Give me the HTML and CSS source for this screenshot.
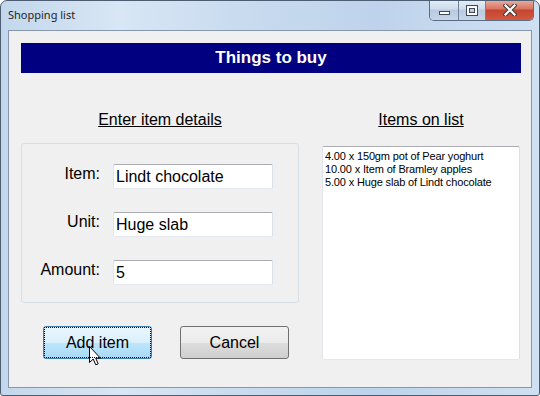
FILE: index.html
```html
<!DOCTYPE html>
<html>
  <head>
    <title>Shopping list</title>
    <link rel="stylesheet" href="styles.css">
  </head>
  <body>
    <div class="window">
      <div class="titlebar">
        <span class="title">Shopping list</span>
        <div class="controls">
          <div class="ctl ctl-min"><span class="min-bar"></span></div>
          <div class="ctl ctl-max"><span class="max-box"></span></div>
          <div class="ctl ctl-close">
            <svg width="14" height="12" viewBox="0 0 14 12">
              <path d="M2.5 1.5 L11.5 10.5 M11.5 1.5 L2.5 10.5" stroke="#3b3b3b" stroke-width="4.2" stroke-linecap="square"/>
              <path d="M2.5 1.5 L11.5 10.5 M11.5 1.5 L2.5 10.5" stroke="#ffffff" stroke-width="2.2" stroke-linecap="square"/>
            </svg>
          </div>
        </div>
      </div>
      <div class="client">
        <div class="banner">Things to buy</div>
        <div class="content">
          <div class="col-left">
            <h2 class="caption">Enter item details</h2>
            <div class="groupbox">
              <label class="field-label" for="item">Item:</label>
              <input class="textbox" id="item" type="text" value="Lindt chocolate">
              <label class="field-label" for="unit">Unit:</label>
              <input class="textbox" id="unit" type="text" value="Huge slab">
              <label class="field-label" for="amount">Amount:</label>
              <input class="textbox" id="amount" type="text" value="5">
            </div>
            <div class="buttons">
              <button class="btn btn-add">
                Add item
                <svg class="pointer" width="13" height="20" viewBox="0 0 13 20">
                  <path d="M0.5 0.5 L0.5 16.5 L4.2 13 L6.8 18.8 L9.2 17.8 L6.7 12.2 L11.5 12.2 Z" fill="#ffffff" stroke="#000000" stroke-width="1" stroke-linejoin="miter"/>
                </svg>
              </button>
              <button class="btn btn-cancel">Cancel</button>
            </div>
          </div>
          <div class="col-right">
            <h2 class="caption">Items on list</h2>
            <div class="listbox">
              <div class="list-row">4.00 x 150gm pot of Pear yoghurt</div>
              <div class="list-row">10.00 x Item of Bramley apples</div>
              <div class="list-row">5.00 x Huge slab of Lindt chocolate</div>
            </div>
          </div>
        </div>
      </div>
    </div>
  </body>
</html>
```

FILE: styles.css
```css
body {
  margin: 0;
  background-color: #ffffff;
  font-family: "Liberation Sans", Arial, sans-serif;
}

.window {
  display: flex;
  flex-direction: column;
  box-sizing: border-box;
  width: 540px;
  height: 396px;
  border: 1px solid #4d5e73;
  border-radius: 7px 7px 3px 3px;
  background: linear-gradient(to right, #c3d7ec 0%, #d8e6f5 22%, #c8dbef 45%, #bed3eb 70%, #cfe0f2 100%);
  overflow: hidden;
}

.titlebar {
  display: flex;
  justify-content: space-between;
  align-items: flex-start;
  height: 29px;
  flex-shrink: 0;
}
.title {
  padding: 5px 0 0 7px;
  font-family: "Noto Sans", "Open Sans", sans-serif;
  font-size: 11px;
  line-height: 18px;
  color: #1e1e1e;
}

.controls {
  display: flex;
  margin-top: -1px;
  margin-right: 5px;
  height: 20px;
  border: 1px solid #5b6c84;
  border-top: none;
  border-radius: 0 0 5px 5px;
  overflow: hidden;
}
.ctl {
  display: flex;
  justify-content: center;
  align-items: center;
  height: 20px;
  background: linear-gradient(to bottom, #e6eef8 0%, #cfdcec 45%, #b9cadf 50%, #c6d5e8 100%);
}
.ctl-min {
  width: 28px;
  border-right: 1px solid #6f819a;
}
.ctl-max {
  width: 26px;
  border-right: 1px solid #6f819a;
}
.ctl-close {
  width: 47px;
  background: linear-gradient(to bottom, #eab0a3 0%, #d9735f 45%, #c54530 50%, #d2583f 100%);
}
.min-bar {
  display: block;
  width: 9px;
  height: 2px;
  margin-top: 5px;
  background-color: #ffffff;
  border: 1px solid #3f4a58;
}
.max-box {
  display: block;
  width: 6px;
  height: 5px;
  border: 2px solid #ffffff;
  outline: 1px solid #3f4a58;
  box-shadow: inset 0 0 0 1px #3f4a58;
}

.client {
  flex: 1;
  margin: 0 7px 7px 7px;
  padding: 12px 0 0 12px;
  border: 1px solid #8696ab;
  background-color: #f0f0f0;
}

.banner {
  width: 500px;
  height: 30px;
  line-height: 30px;
  text-align: center;
  background-color: #000080;
  color: #ffffff;
  font-size: 17px;
  font-weight: bold;
}

.content {
  display: grid;
  grid-template-columns: 278px 198px;
  column-gap: 23px;
  margin-top: 38px;
}

.caption {
  margin: 0;
  font-size: 16px;
  font-weight: normal;
  line-height: 18px;
  text-align: center;
  text-decoration: underline;
  color: #000000;
}

.groupbox {
  display: grid;
  grid-template-columns: 78px 160px;
  grid-auto-rows: 25px;
  column-gap: 13px;
  row-gap: 23px;
  margin-top: 14px;
  padding: 20px 0 17px 0;
  border: 1px solid #d5dfe5;
  border-radius: 3px;
}
.field-label {
  align-self: start;
  padding-top: 1px;
  text-align: right;
  font-size: 16px;
  line-height: 18px;
  color: #000000;
}
.textbox {
  box-sizing: border-box;
  width: 160px;
  height: 25px;
  margin: 0;
  padding: 0 2px;
  border: 1px solid;
  border-color: #abadb3 #dbdfe6 #e3e9ef #e2e3ea;
  border-radius: 2px;
  background-color: #ffffff;
  font-family: "Liberation Sans", Arial, sans-serif;
  font-size: 16px;
  color: #000000;
}

.buttons {
  display: flex;
  gap: 28px;
  margin-top: 23px;
  padding-left: 22px;
}
.btn {
  position: relative;
  box-sizing: border-box;
  width: 109px;
  height: 33px;
  padding: 0;
  border-radius: 3px;
  font-family: "Liberation Sans", Arial, sans-serif;
  font-size: 16px;
  color: #000000;
}
.btn-add {
  border: 1px solid #3c7fb1;
  background: linear-gradient(to bottom, #eaf6fd 0%, #d9f0fc 50%, #bee6fd 51%, #a7d9f5 100%);
}
.btn-add::after {
  content: "";
  position: absolute;
  top: 0;
  left: 0;
  right: 0;
  bottom: 0;
  border: 1px dotted #000000;
}
.btn-cancel {
  border: 1px solid #707070;
  background: linear-gradient(to bottom, #f2f2f2 0%, #ebebeb 50%, #dddddd 51%, #cfcfcf 100%);
}
.pointer {
  position: absolute;
  left: 45px;
  top: 19px;
}

.listbox {
  box-sizing: border-box;
  height: 214px;
  margin-top: 17px;
  padding: 3px 2px;
  border: 1px solid;
  border-color: #abadb3 #dbdfe6 #e3e9ef #e2e3ea;
  border-radius: 2px;
  background-color: #ffffff;
}
.list-row {
  font-size: 11px;
  line-height: 13px;
  letter-spacing: -0.15px;
  color: #000000;
  white-space: nowrap;
}
```
